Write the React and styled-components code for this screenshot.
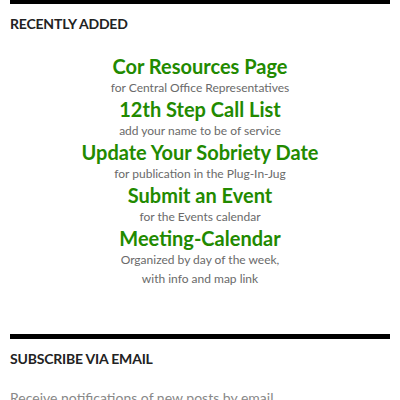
import React from "react";
import styled, { createGlobalStyle } from "styled-components";

const Global = createGlobalStyle`
  html, body { margin: 0; padding: 0; background: #fff; }
  body { font-family: Lato, "Open Sans", sans-serif; overflow: hidden; }
`;

const Page = styled.div`
  width: 400px;
  padding: 0 10px;
  box-sizing: border-box;
  margin-top: -1px;
`;

const Widget = styled.section`
  border-top: 5px solid #000;
  padding-top: 11px;
  margin-bottom: ${(p) => p.$mb || 0}px;
`;

const Heading = styled.h2`
  margin: 0;
  font-family: Lato, sans-serif;
  font-weight: 700;
  font-size: 14px;
  line-height: 18px;
  text-transform: uppercase;
  color: #222;
  letter-spacing: -0.2px;
`;

const List = styled.div`
  margin-top: 21px;
  display: flex;
  flex-direction: column;
  align-items: center;
  text-align: center;
`;

const Title = styled.a`
  display: block;
  font-size: 20px;
  line-height: 24px;
  font-weight: 700;
  color: #228a00;
  text-decoration: none;
`;

const Sub = styled.div`
  font-size: 12px;
  line-height: 19px;
  color: #6a6a6a;
`;

const Text = styled.p`
  margin: 20px 0 0;
  font-size: 14px;
  line-height: 20px;
  color: #888;
`;

const items = [
  ["Cor Resources Page", ["for Central Office Representatives"]],
  ["12th Step Call List", ["add your name to be of service"]],
  ["Update Your Sobriety Date", ["for publication in the Plug-In-Jug"]],
  ["Submit an Event", ["for the Events calendar"]],
  ["Meeting-Calendar", ["Organized by day of the week,", "with info and map link"]],
];

export default function App() {
  return (
    <>
      <Global />
      <Page>
        <Widget $mb={46}>
          <Heading>Recently Added</Heading>
          <List>
            {items.map(([t, subs]) => (
              <React.Fragment key={t}>
                <Title href="#">{t}</Title>
                {subs.map((s) => (
                  <Sub key={s}>{s}</Sub>
                ))}
              </React.Fragment>
            ))}
          </List>
        </Widget>
        <Widget>
          <Heading>Subscribe via Email</Heading>
          <Text>Receive notifications of new posts by email.</Text>
        </Widget>
      </Page>
    </>
  );
}
